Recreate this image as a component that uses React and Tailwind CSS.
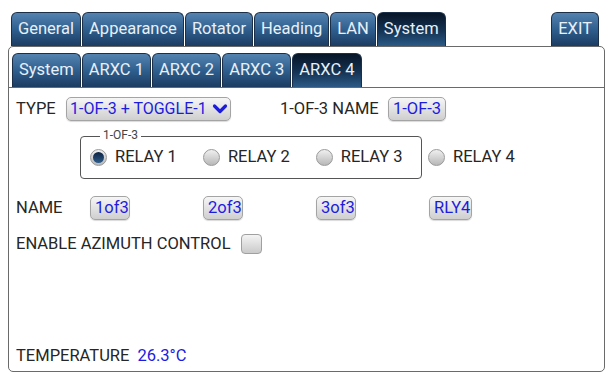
import { useState } from "react";

const mainTabs = ["General", "Appearance", "Rotator", "Heading", "LAN", "System"];
const subTabs = ["System", "ARXC 1", "ARXC 2", "ARXC 3", "ARXC 4"];
const relays = ["RELAY 1", "RELAY 2", "RELAY 3"];

function Tab({ label, active, onClick }) {
  return (
    <button
      onClick={onClick}
      className={`h-[34px] px-[6px] rounded-t-md border border-b-0 border-[#1b2f48] text-[16.5px] leading-none whitespace-nowrap text-[#e8f0f8] ${
        active
          ? "bg-gradient-to-b from-[#081628] via-[#13304f] to-[#2b5a86]"
          : "bg-gradient-to-b from-[#5583b0] via-[#2f5f8e] to-[#1c3c62]"
      }`}
    >
      {label}
    </button>
  );
}

function GrayButton({ children, className = "" }) {
  return (
    <button
      className={`h-[24px] px-[4px] rounded-[5px] border border-[#a4a4a4] bg-gradient-to-b from-[#f6f6f6] to-[#cfcfcf] text-[16.5px] leading-none whitespace-nowrap text-[#1c1ce0] shadow-[0_1px_1px_rgba(0,0,0,0.15)] ${className}`}
    >
      {children}
    </button>
  );
}

function Radio({ checked, label, onClick }) {
  return (
    <button onClick={onClick} className="flex items-center gap-[8px] shrink-0 whitespace-nowrap">
      <span className="w-[17px] h-[17px] shrink-0 rounded-full border border-[#9a9a9a] bg-gradient-to-b from-[#f0f0f0] to-[#b8b8b8] flex items-center justify-center">
        {checked && <span className="w-[11px] h-[11px] rounded-full bg-gradient-to-b from-[#0d2442] to-[#2e5d8c]" />}
      </span>
      <span className="text-[16.5px] text-[#262626]">{label}</span>
    </button>
  );
}

export default function App() {
  const [tab, setTab] = useState("System");
  const [sub, setSub] = useState("ARXC 4");
  const [relay, setRelay] = useState(0);
  const [az, setAz] = useState(false);

  return (
    <div
      className="w-[613px] h-[379px] bg-white px-[8px] pt-[12px] text-[#262626]"
      style={{ fontFamily: "Roboto, 'Liberation Sans', sans-serif" }}
    >
      {/* Main tabs */}
      <div className="flex items-end pl-[3px] pr-[6px]">
        <div className="flex gap-[1px]">
          {mainTabs.map((t) => (
            <Tab key={t} label={t} active={tab === t} onClick={() => setTab(t)} />
          ))}
        </div>
        <div className="ml-auto">
          <Tab label="EXIT" />
        </div>
      </div>

      {/* Panel */}
      <div className="h-[326px] border border-[#6a6a6a] rounded-[5px] flex flex-col">
        <div className="flex gap-[1px] pl-[3px] pt-[6px]">
          {subTabs.map((t) => (
            <Tab key={t} label={t} active={sub === t} onClick={() => setSub(t)} />
          ))}
        </div>
        <div className="flex-1 border-t border-[#6a6a6a] flex flex-col px-[7px]">
          {/* Type row */}
          <div className="flex items-center h-[24px] mt-[9px] whitespace-nowrap">
            <span className="text-[16.5px] w-[50px]">TYPE</span>
            <GrayButton className="w-[165px] flex items-center justify-between pl-[3px] pr-[2px] text-[16px]">
              <span className="text-[16px]">1-OF-3 + TOGGLE-1</span>
              <svg viewBox="0 0 16 16" className="w-[16px] h-[16px] shrink-0" fill="none" stroke="#1c1ce0" strokeWidth="3.2" strokeLinecap="round" strokeLinejoin="round">
                <path d="M2.5 5l5.5 5.5 5.5-5.5" />
              </svg>
            </GrayButton>
            <span className="text-[16.5px] ml-[49px] w-[108px]">1-OF-3 NAME</span>
            <GrayButton>1-OF-3</GrayButton>
          </div>

          {/* Relays */}
          <div className="flex items-end mt-[15px] ml-[64px]">
            <div className="relative w-[342px] shrink-0 h-[43px] border border-[#555] rounded-[4px] flex items-center pl-[9px] gap-[26px]">
              <span className="absolute -top-[9px] left-[19px] bg-white px-[3px] text-[12px] leading-[15px] text-[#444]">1-OF-3</span>
              {relays.map((r, i) => (
                <Radio key={r} label={r} checked={relay === i} onClick={() => setRelay(i)} />
              ))}
            </div>
            <div className="h-[43px] flex items-center ml-[6px]">
              <Radio label="RELAY 4" checked={false} />
            </div>
          </div>

          {/* Names */}
          <div className="flex items-center mt-[17px] h-[24px]">
            <span className="text-[16.5px] w-[74px]">NAME</span>
            <GrayButton className="w-[40px]">1of3</GrayButton>
            <GrayButton className="w-[40px] ml-[73px]">2of3</GrayButton>
            <GrayButton className="w-[40px] ml-[73px]">3of3</GrayButton>
            <GrayButton className="w-[43px] ml-[73px]">RLY4</GrayButton>
          </div>

          {/* Azimuth */}
          <div className="flex items-center mt-[13px] h-[22px]">
            <span className="text-[16.5px] whitespace-nowrap">ENABLE AZIMUTH CONTROL</span>
            <button
              onClick={() => setAz(!az)}
              className="ml-[10px] w-[21px] h-[20px] rounded-[4px] border border-[#a0a0a0] bg-gradient-to-b from-[#f4f4f4] to-[#cacaca]"
            />
          </div>

          <div className="mt-auto mb-[2px] flex items-center text-[16.5px]">
            <span>TEMPERATURE</span>
            <span className="ml-[8px] text-[#1c1ce0]">26.3°C</span>
          </div>
        </div>
      </div>
    </div>
  );
}
